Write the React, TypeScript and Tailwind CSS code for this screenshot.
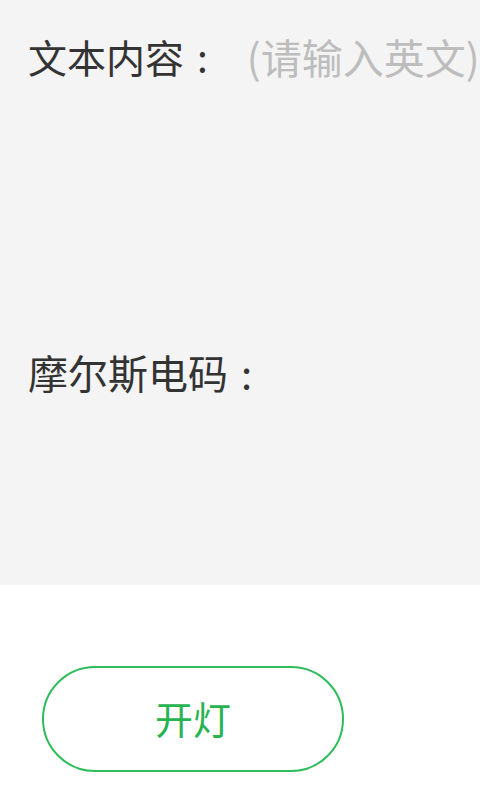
export default function App() {
  return (
    <div className="w-[480px] h-[800px] bg-white overflow-hidden" style={{ fontFamily: '"Noto Sans CJK SC", "Noto Sans", sans-serif' }}>
      <div className="h-[585px] bg-[#f4f4f4] pl-[28px] pt-[32px]">
        <div className="flex items-center h-[48px] text-[39px] leading-[48px] whitespace-nowrap">
          <span className="text-[#333333]">文本内容</span>
          <span className="text-[#333333] pl-[13px]">:</span>
          <span className="ml-[39px] text-[41px] text-[#bdbdbd]">(请输入英文)</span>
        </div>
        <div className="mt-[268px] flex items-center h-[48px] text-[40px] leading-[48px] text-[#333333] whitespace-nowrap">
          <span>摩尔斯电码</span>
          <span className="pl-[13px]">:</span>
        </div>
      </div>
      <div className="pl-[42px] pt-[81px]">
        <button className="w-[302px] h-[106px] rounded-full border-[2.5px] border-[#2dbd5a] bg-white flex items-center justify-center pb-[3px] text-[38px] text-[#27b350]">
          开灯
        </button>
      </div>
    </div>
  );
}
